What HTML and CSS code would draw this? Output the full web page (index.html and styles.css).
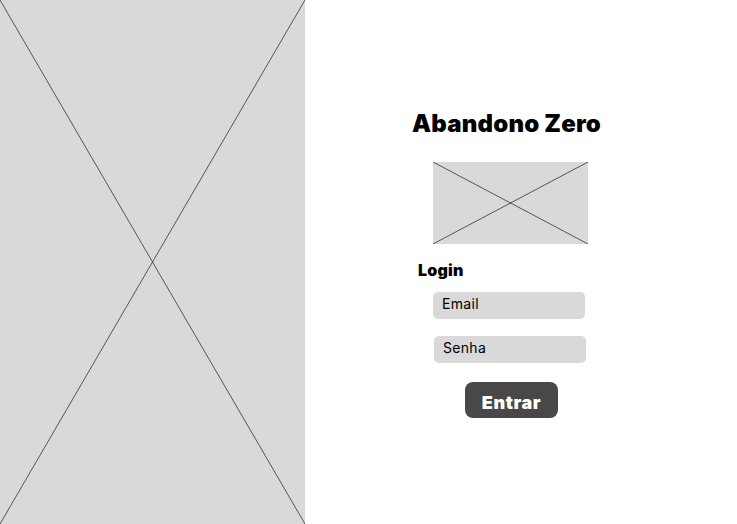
FILE: index.html
```html
<!DOCTYPE html>
<html lang="pt">
<head>
<meta charset="utf-8">
<title>Abandono Zero</title>
<link rel="stylesheet" href="styles.css">
</head>
<body>
<div class="page">
  <div class="hero">
    <svg class="cross" viewBox="0 0 305 524" preserveAspectRatio="none">
      <line x1="0" y1="0" x2="305" y2="524"/>
      <line x1="305" y1="0" x2="0" y2="524"/>
    </svg>
  </div>
  <main class="panel">
    <h1 class="title">Abandono Zero</h1>
    <div class="logo">
      <svg class="cross" viewBox="0 0 155 82" preserveAspectRatio="none">
        <line x1="0" y1="0" x2="155" y2="82"/>
        <line x1="155" y1="0" x2="0" y2="82"/>
      </svg>
    </div>
    <h2 class="login">Login</h2>
    <div class="field field-email">Email</div>
    <div class="field field-senha">Senha</div>
    <button class="btn">Entrar</button>
  </main>
</div>
</body>
</html>
```
FILE: styles.css
```css
html, body {
  margin: 0;
  padding: 0;
  background: #ffffff;
}
.page {
  display: flex;
  width: 737px;
  height: 524px;
  overflow: hidden;
}
.hero {
  width: 305px;
  height: 524px;
  flex: none;
  background: #d9d9d9;
}
.cross {
  display: block;
  width: 100%;
  height: 100%;
}
.cross line {
  stroke: #333333;
  stroke-width: 0.8;
  vector-effect: non-scaling-stroke;
}
.panel {
  display: flex;
  flex-direction: column;
  align-items: flex-start;
  padding-left: 107px;
  padding-top: 108px;
  font-family: "Inter", "Liberation Sans", sans-serif;
  color: #000;
}
.title {
  margin: 0;
  font-size: 24px;
  font-weight: 900;
  line-height: 32px;
  height: 32px;
  letter-spacing: 0.2px;
}
.logo {
  margin: 22px 0 0 21px;
  width: 155px;
  height: 82px;
  background: #d9d9d9;
}
.login {
  margin: 16px 0 0 6px;
  font-size: 16px;
  font-weight: 900;
  line-height: 20px;
  height: 20px;
  letter-spacing: 0.2px;
}
.field {
  box-sizing: border-box;
  width: 152px;
  height: 27px;
  border-radius: 5px;
  background: #d9d9d9;
  font-size: 14px;
  line-height: 20px;
  padding: 2px 0 0 9px;
  font-weight: 400;
  letter-spacing: 0.3px;
}
.field-email {
  margin: 12px 0 0 21px;
}
.field-senha {
  margin: 17px 0 0 22px;
}
.btn {
  margin: 19px 0 0 53px;
  width: 93px;
  height: 36px;
  border: none;
  border-radius: 8px;
  background: #4a4747;
  color: #ffffff;
  font-family: "Inter", "Liberation Sans", sans-serif;
  font-size: 18px;
  font-weight: 900;
  letter-spacing: 0.6px;
  padding: 4px 0 0 0;
}
```
